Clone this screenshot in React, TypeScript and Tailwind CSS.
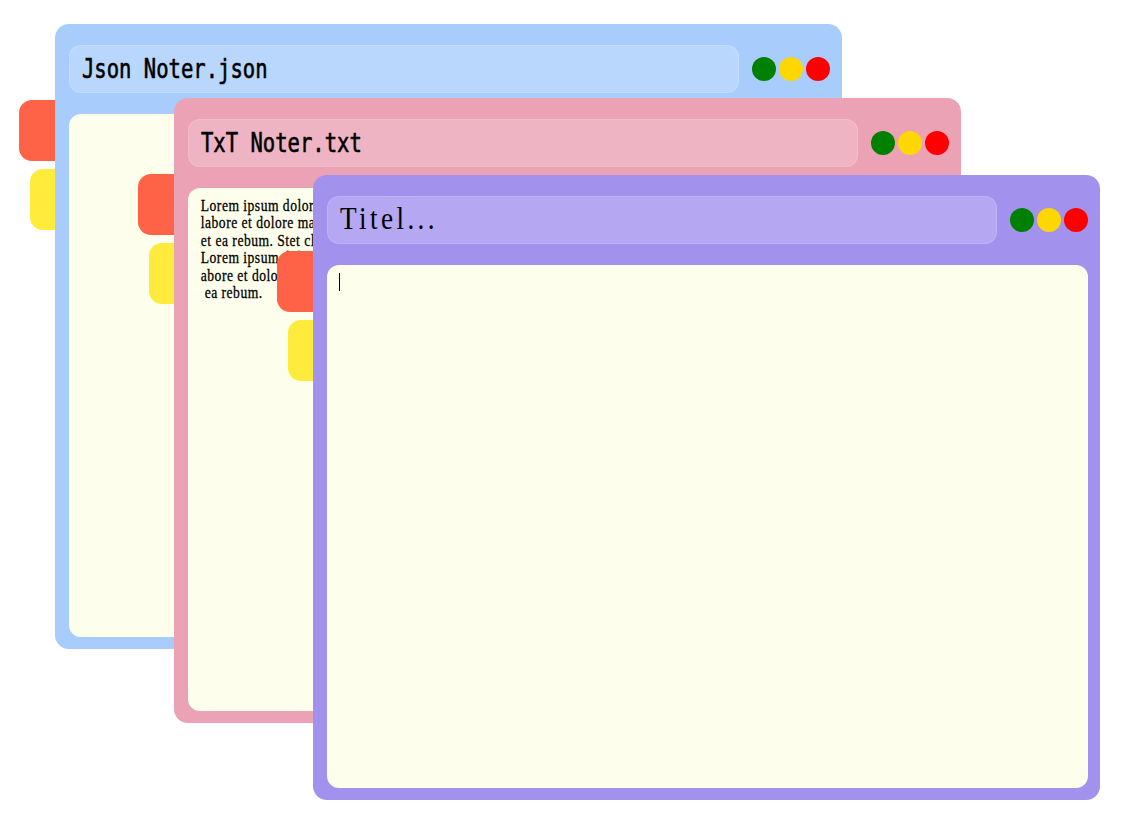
import type { ReactNode } from "react";

const lorem = [
  "Lorem ipsum dolor sit amet, consetetur sadipscing elitr, sed diam nonumy eirmod tempor invidunt ut",
  "labore et dolore magna aliquyam erat, sed diam voluptua. At vero eos et accusam et justo duo dolores",
  "et ea rebum. Stet clita kasd gubergren, no sea takimata sanctus est Lorem ipsum dolor sit amet.",
  "Lorem ipsum dolor sit amet, consetetur sadipscing elitr, sed diam nonumy eirmod tempor invidunt ut l",
  "abore et dolore magna aliquyam erat, sed diam voluptua. At vero eos et accusam et justo duo dolores et",
  " ea rebum.",
];

function Dots() {
  return (
    <div className="flex gap-[3px]">
      <span className="w-6 h-6 rounded-full bg-[#008000]" />
      <span className="w-6 h-6 rounded-full bg-[#ffd700]" />
      <span className="w-6 h-6 rounded-full bg-[#ff0000]" />
    </div>
  );
}

function NoteWindow({
  className,
  frame,
  title,
  children,
}: {
  className: string;
  frame: string;
  title: ReactNode;
  children?: ReactNode;
}) {
  return (
    <div className={`absolute w-[787px] h-[625px] ${className}`}>
      {/* tabs peeking out behind the window */}
      <div className="absolute left-[-36px] top-[76px] w-[90px] h-[61px] rounded-[13px] bg-[#ff6347]" />
      <div className="absolute left-[-25px] top-[145px] w-[90px] h-[61px] rounded-[13px] bg-[#ffeb3b]" />

      <div className={`relative flex flex-col h-full rounded-[14px] pl-[14px] pr-[12px] pt-[21px] pb-[12px] ${frame}`}>
        <div className="flex items-center gap-[13px] h-[48px]">
          <div className="flex-1 h-full flex items-center px-3 rounded-[12px] bg-white/20 border border-white/15 overflow-hidden">
            {title}
          </div>
          <Dots />
        </div>
        <div className="mt-[21px] flex-1 rounded-[12px] bg-[#fdfeec] overflow-hidden">{children}</div>
      </div>
    </div>
  );
}

function SansTitle({ text }: { text: string }) {
  return (
    <span className="block whitespace-pre origin-left scale-x-[0.79] text-[26px] leading-none text-black [-webkit-text-stroke:0.6px_#000] font-['DejaVu_Sans_Mono',monospace]">
      {text}
    </span>
  );
}

export default function App() {
  return (
    <div className="relative w-full h-[837px] bg-white overflow-hidden">
      <NoteWindow className="left-[55px] top-[24px] z-10" frame="bg-[#a8cdfd]" title={<SansTitle text="Json Noter.json" />} />

      <NoteWindow className="left-[174px] top-[98px] z-20" frame="bg-[#eba2b4]" title={<SansTitle text="TxT Noter.txt" />}>
        <div className="pl-[16px] pt-[9px] origin-left scale-x-[0.8] text-[17px] tracking-[0.6px] leading-[17.4px] text-black [-webkit-text-stroke:0.3px_#000] font-['Liberation_Serif',serif]">
          {lorem.map((line, i) => (
            <div key={i} className="whitespace-pre">
              {line}
            </div>
          ))}
        </div>
      </NoteWindow>

      <NoteWindow
        className="left-[313px] top-[175px] z-30"
        frame="bg-[#a391ee]"
        title={
          <span className="block whitespace-pre pb-[4px] origin-left scale-x-[0.85] text-[32px] tracking-[4px] leading-none text-black font-['Liberation_Serif',serif]">
            Titel...
          </span>
        }
      >
        <div className="pl-[12px] pt-[8px]">
          <div className="w-px h-[18px] bg-black" />
        </div>
      </NoteWindow>
    </div>
  );
}
